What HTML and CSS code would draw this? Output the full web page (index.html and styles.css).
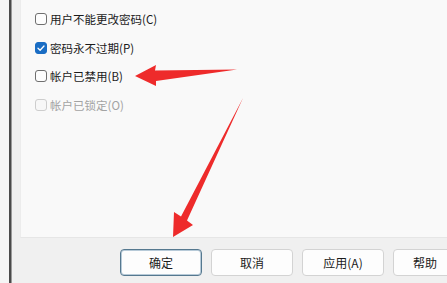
FILE: index.html
```html
<!DOCTYPE HTML>
<html>

<head>
  <meta charset="utf-8" />
  <title>帐户属性</title>
  <link rel="stylesheet" href="styles.css">
</head>

<body>
  <div class="edge"></div>
  <div class="divider"></div>
  <div class="dialog">
    <div class="panel">
      <label class="option">
        <span class="check"></span>
        用户不能更改密码(C)
      </label>
      <label class="option">
        <span class="check checked">
          <svg viewBox="0 0 12 12" width="12" height="12">
            <path d="M3 6.2 L5.1 8.2 L9 4" fill="none" stroke="#fff" stroke-width="1.3" stroke-linecap="round" stroke-linejoin="round" />
          </svg>
        </span>
        密码永不过期(P)
      </label>
      <label class="option">
        <span class="check"></span>
        帐户已禁用(B)
      </label>
      <label class="option disabled">
        <span class="check"></span>
        帐户已锁定(O)
      </label>
    </div>
    <div class="footer">
      <button class="btn btn-default">确定</button>
      <button class="btn">取消</button>
      <button class="btn">应用(A)</button>
      <button class="btn btn-help">帮助</button>
    </div>
  </div>

  <svg class="arrows" viewBox="0 0 447 283" width="447" height="283">
    <polygon points="135,76 156,65 155,70.5 237,69.5 156,81 156,86" fill="#ee2b2b" />
    <polygon points="173,237 174,212 181,216.5 243,98 187,220.5 193,225" fill="#ee2b2b" />
  </svg>
</body>

</html>
```

FILE: styles.css
```css
body {
  width: 447px;
  height: 283px;
  margin: 0;
  overflow: hidden;
  display: flex;
  position: relative;
  background-color: #f3f3f3;
  font-family: "Noto Sans CJK SC", "Noto Sans", sans-serif;
  font-size: 11.5px;
  color: #1b1b1b;
}

.edge {
  flex: none;
  width: 9px;
  background-color: #f5f5f5;
}

.divider {
  flex: none;
  width: 2px;
  background-color: #4a4a4a;
  border-right: 1px solid #9a9a9a;
}

.dialog {
  flex: 1;
  min-width: 0;
  display: flex;
  flex-direction: column;
  background-color: #f0f0f0;
  padding-left: 8px;
}

.panel {
  height: 238px;
  padding: 5px 0 0 14px;
  background-color: #f9f9f9;
  border-bottom: 1px solid #e6e6e6;
  border-left: 1px solid #ececec;
  box-sizing: border-box;
}

.option {
  height: 28.5px;
  display: flex;
  align-items: center;
}

.check {
  width: 12px;
  height: 12px;
  margin-right: 3px;
  border: 1px solid #6f6f6f;
  border-radius: 3px;
  background-color: #fdfdfd;
  box-sizing: border-box;
  display: flex;
}

.check.checked {
  border-color: #1a6dc4;
  background-color: #1a6dc4;
}

.check svg {
  margin: -1px;
}

.option.disabled {
  color: #a3a3a3;
}

.option.disabled .check {
  border-color: #cdcdcd;
  background-color: #f7f7f7;
}

.footer {
  flex: 1;
  display: flex;
  gap: 9px;
  padding: 11px 0 0 100px;
  overflow: hidden;
}

.btn {
  flex: none;
  width: 82px;
  height: 27px;
  padding: 0;
  border: 1px solid #d3d3d3;
  border-radius: 4px;
  background-color: #fdfdfd;
  font-family: inherit;
  font-size: 12px;
  color: #1b1b1b;
}

.btn-default {
  border-color: #55788f;
  box-shadow: inset 0 0 0 1px #b7cad8;
}

.btn-help {
  padding-right: 18px;
}

.arrows {
  position: absolute;
  left: 0;
  top: 0;
}
```
